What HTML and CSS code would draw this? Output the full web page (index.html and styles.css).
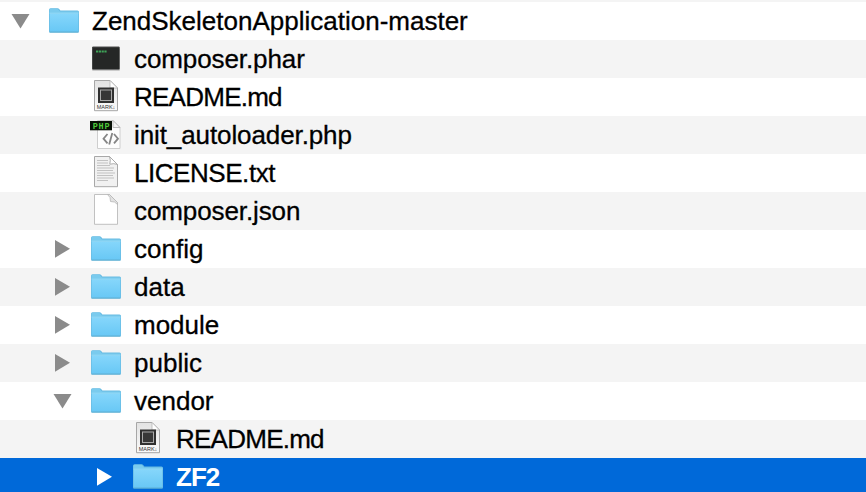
FILE: index.html
```html
<!DOCTYPE html>
<html lang="en">
<head>
    <meta charset="UTF-8">
    <meta name="viewport" content="width=device-width, initial-scale=1.0">
    <title>ZendSkeletonApplication-master</title>
    <link rel="stylesheet" href="styles.css">
</head>
<body>
    <svg class="defs" width="0" height="0">
        <defs>
            <linearGradient id="folder-fill" x1="0" y1="0" x2="0" y2="1">
                <stop offset="0" stop-color="#85d6fb"/>
                <stop offset="1" stop-color="#69c8f5"/>
            </linearGradient>
            <linearGradient id="page-fill" x1="0" y1="0" x2="0" y2="1">
                <stop offset="0" stop-color="#e2e2e2"/>
                <stop offset="1" stop-color="#fafafa"/>
            </linearGradient>
        </defs>
        <symbol id="down" viewBox="0 0 20 38">
            <path d="M1.5 12H19.5L10.5 26.5Z"/>
        </symbol>
        <symbol id="right" viewBox="0 0 20 38">
            <path d="M3 10V27.7L18 18.8Z"/>
        </symbol>
        <symbol id="folder" viewBox="0 0 32 38">
            <path d="M1 8Q1 6.3 2.6 6.3H9.5Q10.7 6.3 11.4 7.3L12.4 8.5H29.5Q31 8.5 31 10V29.2Q31 30.5 29.7 30.5H2.3Q1 30.5 1 29.2Z" fill="#68bbe2"/>
            <path d="M1.5 8Q1.5 6.8 2.6 6.8H9.5L12 9.5H30.5V11H1.5Z" fill="#7acbee"/>
            <path d="M1.7 11.5H30.3V29.5H1.7Z" fill="url(#folder-fill)"/>
            <path d="M1.5 11.2H30.5" stroke="#a0e1fc" stroke-width=".8"/>
            <path d="M1.5 30.2H30.5" stroke="#57a9ce" stroke-width=".8"/>
        </symbol>
        <symbol id="terminal" viewBox="0 0 32 38">
            <rect x="2" y="8" width="28" height="22.7" rx="1" fill="#bdbdbd"/>
            <rect x="2.2" y="6.8" width="27.4" height="22.8" rx=".8" fill="#252726"/>
            <path d="M2.5 7.2H29.3" stroke="#454746" stroke-width=".8"/>
            <path d="M6 11.5H16.6" stroke="#3fa458" stroke-width="2" stroke-dasharray="2.2 .6"/>
        </symbol>
        <symbol id="markdown" viewBox="0 0 32 38">
            <path d="M4.5 2.5H20L27.5 10V32.7H4.5Z" fill="url(#page-fill)" stroke="#a6a6a6"/>
            <path d="M20 2.5V10H27.5Z" fill="#fff" stroke="#b5b5b5" stroke-width=".8"/>
            <rect x="8" y="9.5" width="16" height="15.5" fill="#303030"/>
            <rect x="10.5" y="12" width="11" height="10.5" fill="#373737" stroke="#aaa"/>
        </symbol>
        <symbol id="php" viewBox="0 0 32 38">
            <path d="M7.5 4.5H23L30 11.5V32.5H7.5Z" fill="#fdfdfd" stroke="#cecece"/>
            <path d="M23 4.5V11.5H30Z" fill="#f5f5f5" stroke="#bcbcbc"/>
            <path d="M17.5 18L13.5 22.7L17.5 27.4M24 18L28 22.7L24 27.4M22.3 17L19.2 28.5" fill="none" stroke="#858585" stroke-width="1.8"/>
            <rect x="0" y="5" width="22" height="9.3" fill="#071006"/>
        </symbol>
        <symbol id="text" viewBox="0 0 32 38">
            <path d="M4.5 2.5H19.5L27.5 10.5V32.7H4.5Z" fill="#f1f1f1" stroke="#a8a8a8"/>
            <path d="M7 6.5H18M7 9H18M7 11.5H20M7 14H24M7 16.5H23M7 19H25M7 21.5H23M7 24H24M7 26.5H18" stroke="#bcbcbc" stroke-width=".9"/>
            <path d="M19.5 2.5Q21 6 19.8 10.2Q24 9 27.5 10.5Z" fill="#fff" stroke="#a5a5a5" stroke-width=".9"/>
        </symbol>
        <symbol id="blank" viewBox="0 0 32 38">
            <path d="M4.5 2.5H19.5L27.5 10.5V32.3H4.5Z" fill="#fff" stroke="#bababa" stroke-width=".9"/>
            <path d="M17.5 2.5Q21 5 20.5 9.5Q25 9 27.5 12.5V10.5L19.5 2.5Z" fill="#e2e2e2" stroke="#b5b5b5" stroke-width=".8"/>
        </symbol>
    </svg>

    <ul class="file-list">
        <li class="row">
            <svg class="arrow"><use href="#down"/></svg>
            <svg class="icon"><use href="#folder"/></svg>
            <span class="name">ZendSkeletonApplication-master</span>
        </li>
        <li class="row level-1">
            <span class="arrow"></span>
            <svg class="icon"><use href="#terminal"/></svg>
            <span class="name file">composer.phar</span>
        </li>
        <li class="row level-1">
            <span class="arrow"></span>
            <svg class="icon"><use href="#markdown"/><text x="16" y="31.3" class="mark-label">MARK↓</text></svg>
            <span class="name readme">README.md</span>
        </li>
        <li class="row level-1">
            <span class="arrow"></span>
            <svg class="icon"><use href="#php"/><text x="11.5" y="12.5" class="php-label">PHP</text></svg>
            <span class="name file">init_autoloader.php</span>
        </li>
        <li class="row level-1">
            <span class="arrow"></span>
            <svg class="icon"><use href="#text"/></svg>
            <span class="name license">LICENSE.txt</span>
        </li>
        <li class="row level-1">
            <span class="arrow"></span>
            <svg class="icon"><use href="#blank"/></svg>
            <span class="name file">composer.json</span>
        </li>
        <li class="row level-1">
            <svg class="arrow"><use href="#right"/></svg>
            <svg class="icon"><use href="#folder"/></svg>
            <span class="name">config</span>
        </li>
        <li class="row level-1">
            <svg class="arrow"><use href="#right"/></svg>
            <svg class="icon"><use href="#folder"/></svg>
            <span class="name">data</span>
        </li>
        <li class="row level-1">
            <svg class="arrow"><use href="#right"/></svg>
            <svg class="icon"><use href="#folder"/></svg>
            <span class="name">module</span>
        </li>
        <li class="row level-1">
            <svg class="arrow"><use href="#right"/></svg>
            <svg class="icon"><use href="#folder"/></svg>
            <span class="name">public</span>
        </li>
        <li class="row level-1">
            <svg class="arrow"><use href="#down"/></svg>
            <svg class="icon"><use href="#folder"/></svg>
            <span class="name">vendor</span>
        </li>
        <li class="row level-2">
            <span class="arrow"></span>
            <svg class="icon"><use href="#markdown"/><text x="16" y="31.3" class="mark-label">MARK↓</text></svg>
            <span class="name readme">README.md</span>
        </li>
        <li class="row level-2 selected">
            <svg class="arrow"><use href="#right"/></svg>
            <svg class="icon"><use href="#folder"/></svg>
            <span class="name">ZF2</span>
        </li>
    </ul>
</body>
</html>
```
FILE: styles.css
```css
body {
    margin: 0;
    height: 492px;
    overflow: hidden;
    background-color: #fff;
    font-family: "Liberation Sans", Arial, sans-serif;
    font-size: 26px;
    color: #000;
}
.defs {
    display: block;
}
.file-list {
    margin: 0;
    padding: 0;
    list-style: none;
    border-top: 2px solid #f4f4f4;
}
.row {
    display: flex;
    height: 38px;
    padding-left: 10px;
    background-color: #fff;
}
.row:nth-child(even) {
    background-color: #f4f4f4;
}
.level-1 {
    padding-left: 52px;
}
.level-2 {
    padding-left: 94px;
}
.arrow {
    flex: none;
    width: 20px;
    height: 38px;
    margin-right: 18px;
    fill: #8b8b8b;
}
.icon {
    flex: none;
    width: 32px;
    height: 38px;
    margin-right: 12px;
}
.name {
    line-height: 38px;
    white-space: nowrap;
    -webkit-text-stroke: 0.3px currentColor;
}
.file {
    letter-spacing: -0.1px;
}
.readme {
    letter-spacing: -0.75px;
}
.license {
    letter-spacing: -0.45px;
}
.row.selected {
    background-color: #0069d9;
    color: #fff;
}
.selected .arrow {
    fill: #fff;
}
.selected .name {
    font-weight: bold;
    letter-spacing: -1px;
    -webkit-text-stroke: 0;
}
.mark-label {
    font-size: 5.5px;
    text-anchor: middle;
    fill: #333;
}
.php-label {
    font-family: "Liberation Mono", monospace;
    font-size: 8.5px;
    font-weight: bold;
    letter-spacing: 0.8px;
    text-anchor: middle;
    fill: #4fc83c;
}
```
